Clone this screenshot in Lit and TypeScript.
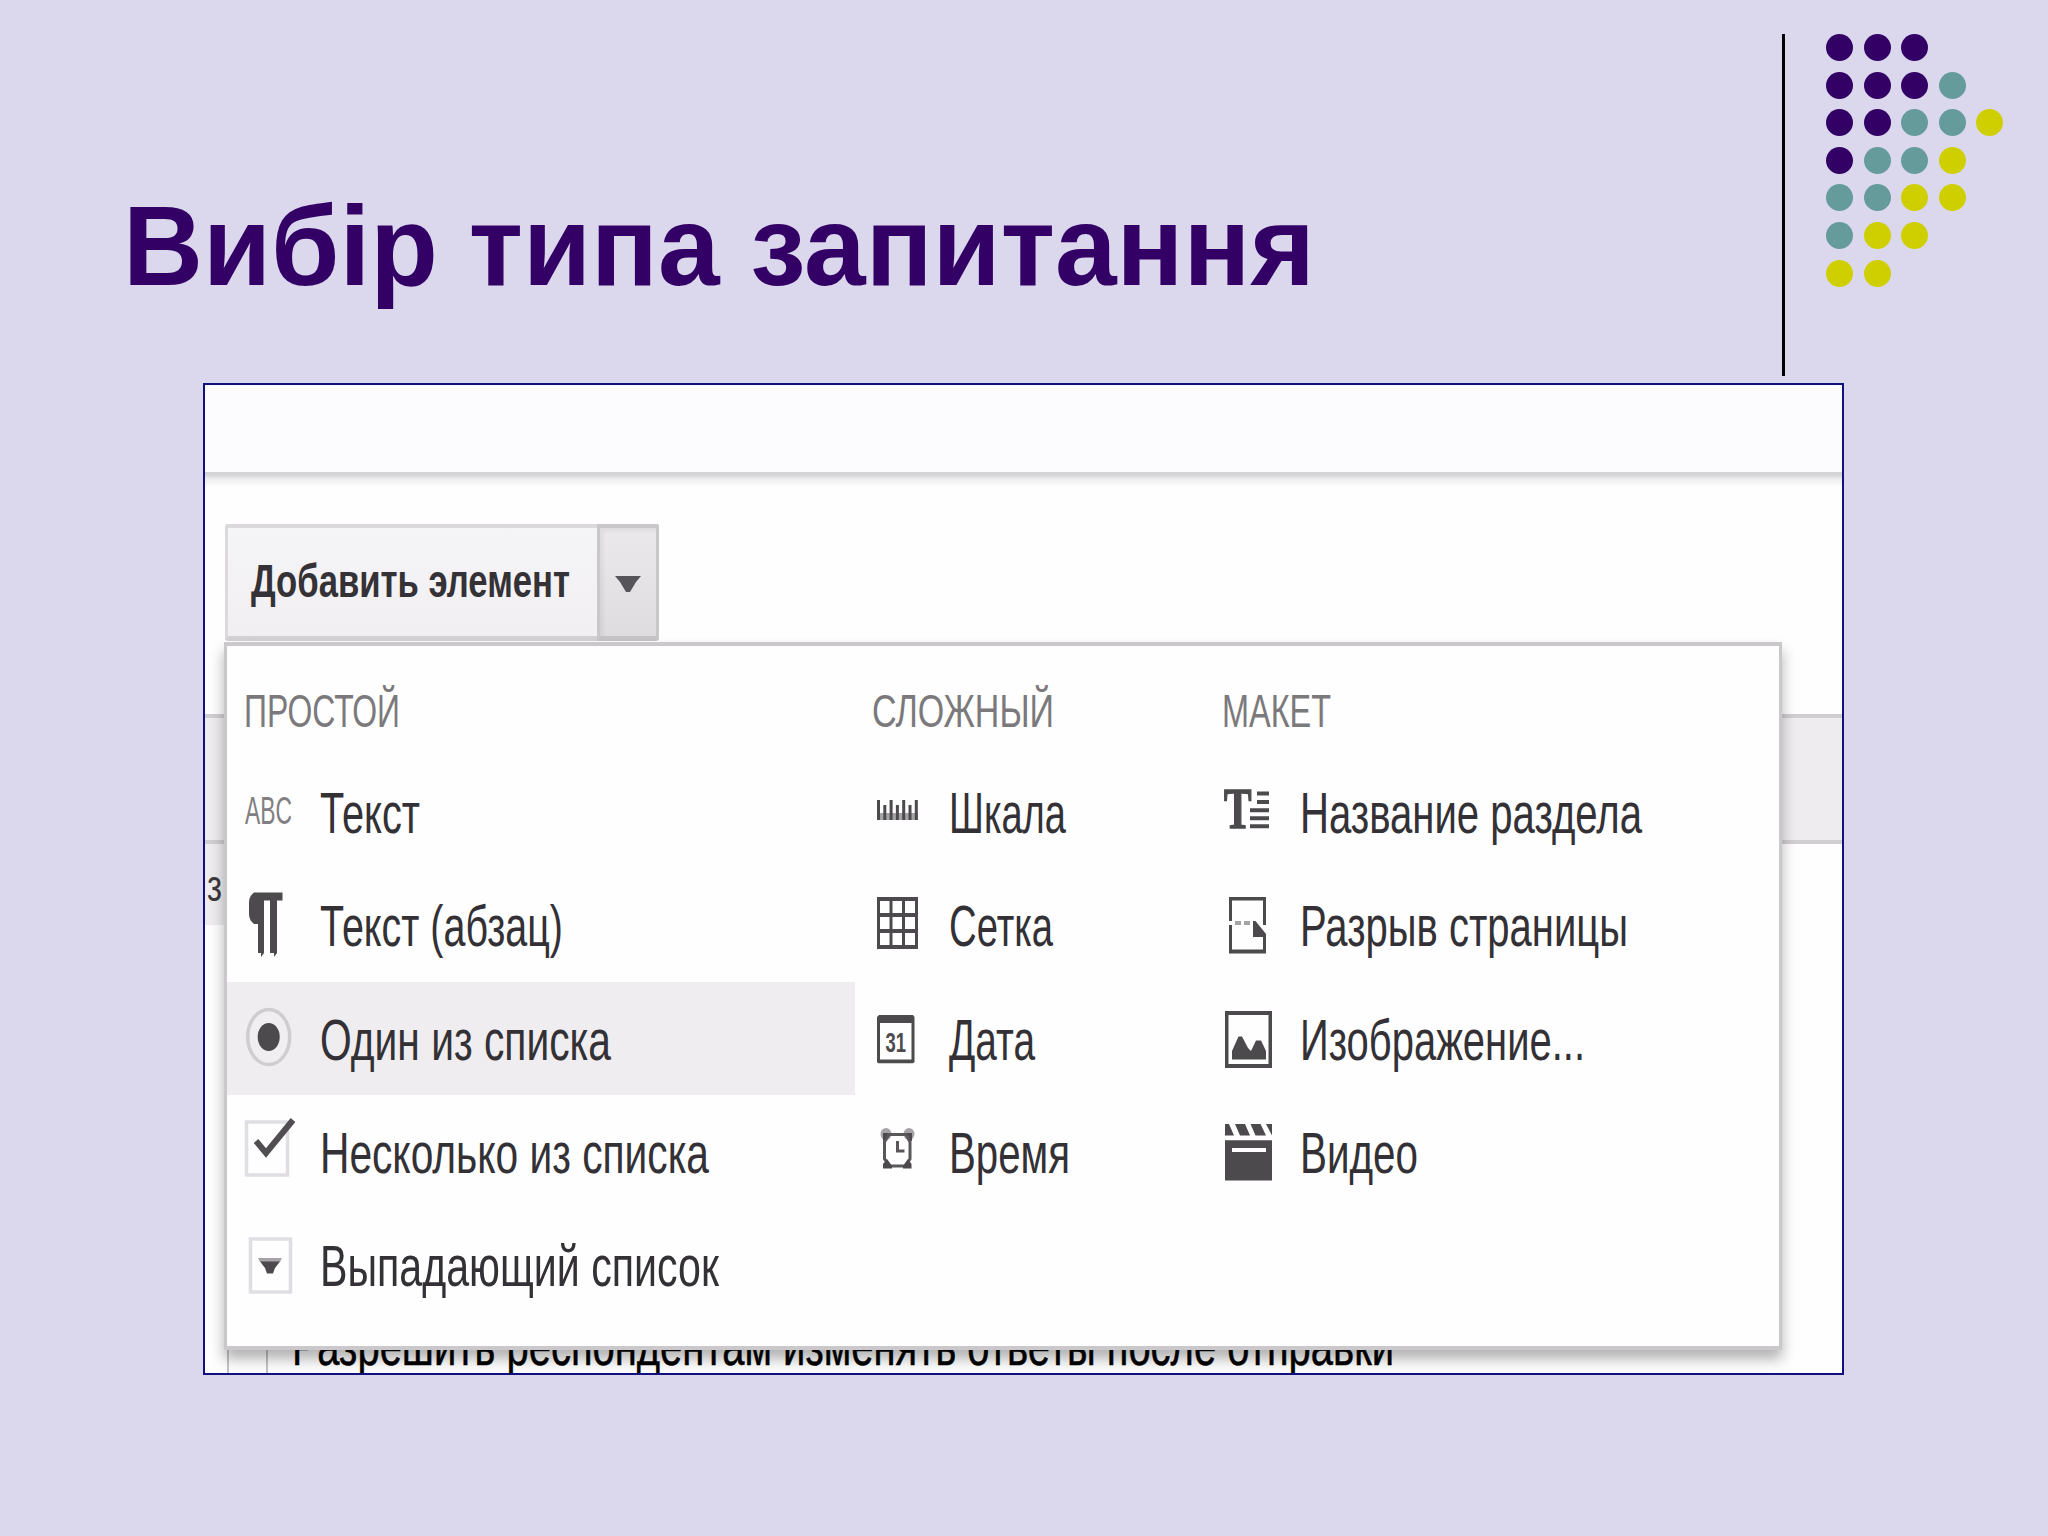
import { LitElement, html, css, svg, TemplateResult } from "lit";
import { customElement } from "lit/decorators.js";

const DOTS = ["ppp", "pppt", "pptty", "ptty", "ttyy", "tyy", "yy"];

/** One line of condensed text whose advance width is exactly `width`. */
const fitted = (text: string, width: number, cls: string, height: number, baseline: number) => html`
  <svg class="fit ${cls}" width=${width} height=${height}>
    <text x="0" y=${baseline} textLength=${width} lengthAdjust="spacingAndGlyphs">${text}</text>
  </svg>`;

const ICONS: Record<string, TemplateResult> = {
  abc: svg`<text class="abc" x="5" y="68.5" textLength="47" lengthAdjust="spacingAndGlyphs">ABC</text>`,
  para: svg`<path d="M14 24.6H42.5V32.4H37V85L34 89V85H30V32.4H24V85L21 89V85H18V56H14Q9 52 9 46V35Q9 28 14 24.6Z"/>`,
  radio: svg`<ellipse class="ring" cx="28.7" cy="55" rx="21" ry="27.5"/><ellipse cx="28.7" cy="55" rx="11" ry="14"/>`,
  check: svg`<rect class="frame" x="6.5" y="27" width="41" height="53"/><path class="tick" d="M16 46L26 58L53 25"/>`,
  drop: svg`<rect class="frame" x="10.5" y="31" width="40" height="53"/><path class="soft" d="M18 50H42L40 54H20Z"/><path d="M20 53.500H40L35 60L33 65.500H27L25 60Z"/>`,
  scale: svg`<rect class="soft" x="5" y="58" width="41" height="7"/>${[0, 1, 2, 3, 4, 5, 6].map(
    (i) => svg`<rect x=${5 + i * 6.3} y=${i % 2 ? 50 : 45} width="3" height=${i % 2 ? 15 : 20}/>`
  )}`,
  grid: svg`<path d="M5 29H46V81H5ZM8 33V45H17.5V33ZM20.5 33V45H30V33ZM33 33V45H43V33ZM8 49V61H17.5V49ZM20.5 49V61H30V49ZM33 49V61H43V49ZM8 65V77H17.5V65ZM20.5 65V77H30V65ZM33 65V77H43V65Z" fill-rule="evenodd"/>`,
  date: svg`<path d="M7 33H41L42.5 35V80L41 81.3H6L5 80V35ZM8 41V77.5H39.5V41Z" fill-rule="evenodd"/><text class="day" x="13.5" y="69.5" textLength="20.5" lengthAdjust="spacingAndGlyphs">31</text>`,
  clock: svg`<ellipse class="soft" cx="14" cy="39" rx="5.5" ry="6"/><ellipse class="soft" cx="37" cy="39" rx="5.5" ry="6"/>
    <path d="M11 38H40V46H38L36.500 41H14.500L13 46H11Z"/>
    <path class="line3" d="M17 39.500H34L38 47V64L33 71H18L12.500 64V47Z"/>
    <path d="M11 73.500V69L15 64L20 71V73.500ZM39.500 73.500V69L36 64L31 71V73.500Z"/>
    <path class="line3" d="M25.500 46V56H32.500"/>`,
  title: svg`<text class="serif" x="2" y="73.200" textLength="27.500" lengthAdjust="spacingAndGlyphs">T</text>
    <path d="M35 36.500H47V40.500H35ZM35 45H47V49H35ZM28 53.200H47V57.200H28ZM28 61.200H47V65.200H28ZM28 69.200H47V73.200H28Z"/>`,
  brk: svg`<path d="M7 29H44V57H41V32.500H10V53H7ZM7 57H10V81.500H41V69H31V53H33.500L44 66V85.500H7Z"/><path class="soft" d="M13 53H19V57H13ZM22 53H28V57H22Z"/>`,
  image: svg`<path d="M3 29H50V86H3ZM6.500 33V82H46.500V33Z" fill-rule="evenodd"/><path d="M10 77.500V69L16.500 54.500H20L26 66L29 69L34 58.500H39L44 69V77.500Z"/>`,
  video: svg`<path d="M3 29H7L12 40.500H3ZM13 29H23L28 40.500H18ZM28.500 29H38.500L44 40.500H33.500ZM44 29H50V40.500Z"/><path d="M3 45.200H50V85.500H3ZM10 53V57H44V53Z" fill-rule="evenodd"/>`,
};

interface Item { icon: string; text: string; width: number; active?: boolean }
interface Group { cls: string; title: string; width: number; items: Item[] }

const GROUPS: Group[] = [
  {
    cls: "g1", title: "ПРОСТОЙ", width: 156,
    items: [
      { icon: "abc", text: "Текст", width: 100 },
      { icon: "para", text: "Текст (абзац)", width: 243 },
      { icon: "radio", text: "Один из списка", width: 291 },
      { icon: "check", text: "Несколько из списка", width: 389 },
      { icon: "drop", text: "Выпадающий список", width: 399 },
    ].map((i) => ({ ...i, active: i.icon === "radio" })),
  },
  {
    cls: "g2", title: "СЛОЖНЫЙ", width: 182,
    items: [
      { icon: "scale", text: "Шкала", width: 117 },
      { icon: "grid", text: "Сетка", width: 104 },
      { icon: "date", text: "Дата", width: 86 },
      { icon: "clock", text: "Время", width: 121 },
    ],
  },
  {
    cls: "g3", title: "МАКЕТ", width: 109,
    items: [
      { icon: "title", text: "Название раздела", width: 342 },
      { icon: "brk", text: "Разрыв страницы", width: 328 },
      { icon: "image", text: "Изображение...", width: 285 },
      { icon: "video", text: "Видео", width: 118 },
    ],
  },
];

@customElement("app-root")
export class AppRoot extends LitElement {
  static styles = css`
    :host {
      display: block;
      width: 2048px;
      height: 1536px;
      overflow: hidden;
      background: #dbd8ee;
      font-family: "Liberation Sans", Arial, sans-serif;
    }
    * { box-sizing: border-box; }
    svg { display: block; flex: none; }
    .fit { overflow: visible; }
    .header { display: flex; height: 383px; padding: 34px 0 0 123px; }
    .title { margin: 130px 0 0; width: 1659px; }
    .t-title { font-size: 114px; font-weight: 700; fill: #330066; }
    .rule { width: 2.500px; height: 341.500px; background: #000; }
    .dots { display: flex; flex-direction: column; gap: 10.600px; padding-left: 41.500px; }
    .dotrow { display: flex; gap: 10.600px; }
    .dot { width: 27px; height: 27px; border-radius: 50%; }
    .p { background: #330066; }
    .t { background: #669b9c; }
    .y { background: #cfcf00; }

    .frame-box {
      position: relative;
      margin-left: 203px;
      width: 1641px;
      height: 992px;
      border: 2px solid #10107e;
      background: #fefefe;
      overflow: hidden;
    }
    .topbar { height: 87px; background: #fcfbfd; }
    .topshade { height: 15px; background: linear-gradient(#d2d1d3 0, #d8d7d9 25%, #ededee 45%, #fefefe); }
    .actions { display: flex; height: 227px; padding: 37px 0 0 20px; }
    .add {
      width: 372px; height: 117px;
      padding: 0 0 0 23px;
      border: 3px solid #dbd9dc; border-top-width: 4px; border-bottom: 5px solid #d3d1d4;
      border-right: 0;
      border-radius: 3px 0 0 3px;
      background: linear-gradient(#f5f4f6, #f1eff2);
    }
    .t-add { font-size: 47px; font-weight: 700; fill: #343236; }
    .arrow {
      display: flex; align-items: center; justify-content: center;
      width: 62px; height: 117px;
      padding-top: 3px;
      border: 3px solid #c9c7ca; border-top-width: 4px; border-bottom: 5px solid #c6c4c7;
      border-radius: 0 3px 3px 0;
      background: linear-gradient(#ebe9ec, #dedcdf);
      box-shadow: inset 3px 3px 4px rgba(0, 0, 0, 0.060);
    }
    .arrow svg { fill: #565458; }
    .band { height: 130px; border-top: 4px solid #d0ced1; border-bottom: 4px solid #d0ced1; background: #eeecef; }
    .cell { width: 30px; height: 81px; padding-left: 2px; background: #eeecef; }
    .t-cell { font-size: 44px; fill: #3b393c; }
    .t-low { font-size: 56px; fill: #000; stroke: #000; stroke-width: 0.500; }
    .low { display: flex; height: 60px; margin-top: 388px; padding-left: 22px; }
    .bars { width: 41px; height: 60px; border: solid #c4c2c5; border-width: 0 2.500px; }
    .lowtext { padding-left: 24px; }

    .menu {
      position: absolute;
      left: 19px; top: 257px;
      width: 1558px; height: 708px;
      display: flex;
      border: 3px solid #cac8cb; border-top-width: 4px; border-bottom-width: 4px;
      background: #fefefe;
      box-shadow: 0 9px 13px rgba(0, 0, 0, 0.300);
    }
    .g1 { width: 628px; }
    .g2 { width: 350px; margin-left: 17px; }
    .g3 { width: 460px; }
    .g1 .head { padding-left: 17px; }
    .head { height: 109px; }
    .t-head { font-size: 47px; fill: #7b797c; }
    .t-item { font-size: 56.500px; fill: #333135; }
    .row { display: flex; height: 113.300px; }
    .g1 .row { padding-left: 13px; }
    .active { background: #efedf0; }
    .icon { fill: #4c4a4d; overflow: visible; }
    .g1 .icon { margin-right: 4px; }
    .abc { font-size: 39px; fill: #817f82; }
    .day { font-size: 28px; font-weight: 700; }
    .serif { font-family: "Liberation Serif", serif; font-size: 56px; font-weight: 700; stroke: #4c4a4d; stroke-width: 1.500; }
    .ring { fill: #f0eef1; stroke: #cfcdd0; stroke-width: 3.500; }
    .frame { fill: #fefefe; stroke: #e0dee2; stroke-width: 3.500; }
    .tick { fill: none; stroke: #504e51; stroke-width: 6; }
    .line3 { fill: none; stroke: #59575a; stroke-width: 3; }
    .soft { fill: #a5a3a6; }
  `;

  private group(g: Group) {
    return html`<section class=${g.cls}>
      <div class="head">${fitted(g.title, g.width, "t-head", 100, 80.500)}</div>
      ${g.items.map(
        (i) => html`<div class="row ${i.active ? "active" : ""}">
          <svg class="icon" width=${g.cls === "g1" ? 76 : g.cls === "g2" ? 77 : 78} height="113">${ICONS[i.icon]}</svg>
          ${fitted(i.text, i.width, "t-item", 110, 78)}
        </div>`
      )}
    </section>`;
  }

  render() {
    return html`
      <header class="header">
        <h1 class="title">${fitted("Вибір типа запитання", 1192, "t-title", 160, 121)}</h1>
        <div class="rule"></div>
        <div class="dots">
          ${DOTS.map((r) => html`<div class="dotrow">${[...r].map((c) => html`<i class="dot ${c}"></i>`)}</div>`)}
        </div>
      </header>
      <main class="frame-box">
        <div class="topbar"></div>
        <div class="topshade"></div>
        <div class="actions">
          <div class="add">${fitted("Добавить элемент", 319, "t-add", 100, 69)}</div>
          <div class="arrow">
            <svg width="26" height="18"><path d="M0 1H26L21 7L15 17H11L5 7Z" /></svg>
          </div>
        </div>
        <div class="band"></div>
        <div class="cell">${fitted("з", 15, "t-cell", 80, 57)}</div>
        <div class="low">
          <div class="bars"></div>
          <div class="lowtext">${fitted("Разрешить респондентам изменять ответы после отправки", 1102, "t-low", 60, 52)}</div>
        </div>
        <div class="menu">${GROUPS.map((g) => this.group(g))}</div>
      </main>
    `;
  }
}
